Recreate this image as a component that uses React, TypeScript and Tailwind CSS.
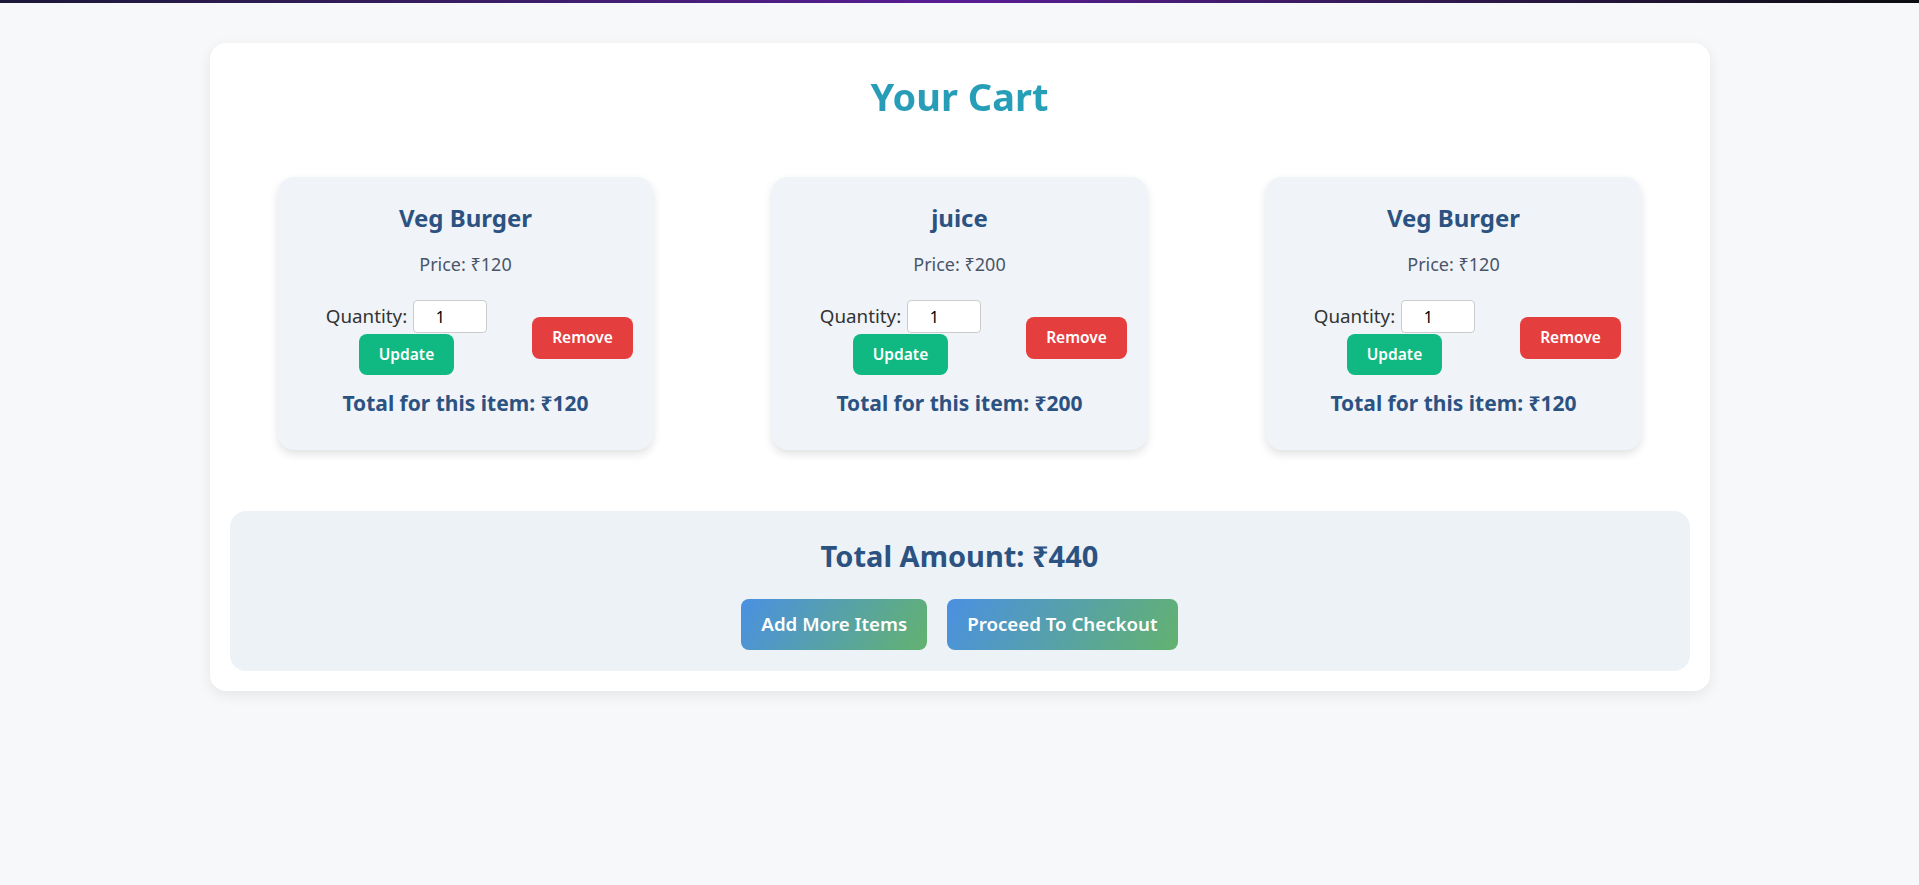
const items = [
  { name: "Veg Burger", price: 120, qty: 1 },
  { name: "juice", price: 200, qty: 1 },
  { name: "Veg Burger", price: 120, qty: 1 },
];

function CartItem({ name, price, qty }: { name: string; price: number; qty: number }) {
  return (
    <div className="w-[375px] rounded-2xl bg-[#f0f4f8] px-5 pt-[26px] pb-[32px] text-center shadow-[0_4px_10px_rgba(0,0,0,0.12)]">
      <h3 className="text-[24px] leading-[29px] font-bold text-[#2c5282]">{name}</h3>
      <p className="mt-[19px] text-[18px] leading-[27px] text-[#4a5568]">Price: ₹{price}</p>
      <div className="mt-[22px] flex items-center justify-between">
        <div className="flex w-[217px] flex-col items-center">
          <div className="flex h-[34px] items-center gap-[6px] pb-px">
            <span className="text-[18.8px] text-[#333]">Quantity:</span>
            <input
              type="text"
              defaultValue={qty}
              className="h-[33px] w-[74px] rounded-[4px] border border-[#ccc] bg-white pr-[20px] text-center text-[16px] text-black outline-none"
            />
          </div>
          <button className="h-[41px] w-[95px] rounded-lg bg-[#10b981] text-[15.5px] font-semibold text-white">
            Update
          </button>
        </div>
        <button className="h-[42px] w-[101px] rounded-lg bg-[#e53e3e] text-[15.5px] font-semibold text-white">
          Remove
        </button>
      </div>
      <p className="mt-[13px] text-[21px] leading-[30px] font-bold text-[#2c5282]">
        Total for this item: ₹{price * qty}
      </p>
    </div>
  );
}

export default function App() {
  const total = items.reduce((sum, i) => sum + i.price * i.qty, 0);

  return (
    <div className="min-h-screen bg-[#f7f8fa] font-['Noto_Sans',sans-serif]">
      <div className="h-[3px] bg-gradient-to-r from-[#1c1838] via-[#5a1c96] to-[#0c0c10]" />
      <div className="mx-auto mt-10 w-[1500px] rounded-2xl bg-white px-5 pt-[29px] pb-5 shadow-[0_4px_14px_rgba(0,0,0,0.08)]">
        <h1 className="bg-gradient-to-r from-[#2d92bd] to-[#1fa9b2] bg-clip-text text-center text-[38px] leading-[48px] font-bold text-transparent">
          Your Cart
        </h1>
        <div className="mt-[57px] flex justify-center gap-[119px]">
          {items.map((item, idx) => (
            <CartItem key={idx} {...item} />
          ))}
        </div>
        <div className="mt-[61px] rounded-2xl bg-[#edf2f7] pt-[28px] pb-[21px] text-center">
          <h2 className="text-[29px] leading-[34px] font-bold text-[#2c5282]">Total Amount: ₹{total}</h2>
          <div className="mt-[26px] flex justify-center gap-5">
            <button className="h-[51px] rounded-lg bg-[linear-gradient(120deg,#4a90e2,#63b26f)] px-5 text-[18.7px] font-semibold text-white">
              Add More Items
            </button>
            <button className="h-[51px] rounded-lg bg-[linear-gradient(120deg,#4a90e2,#63b26f)] px-5 text-[18.7px] font-semibold text-white">
              Proceed To Checkout
            </button>
          </div>
        </div>
      </div>
    </div>
  );
}
